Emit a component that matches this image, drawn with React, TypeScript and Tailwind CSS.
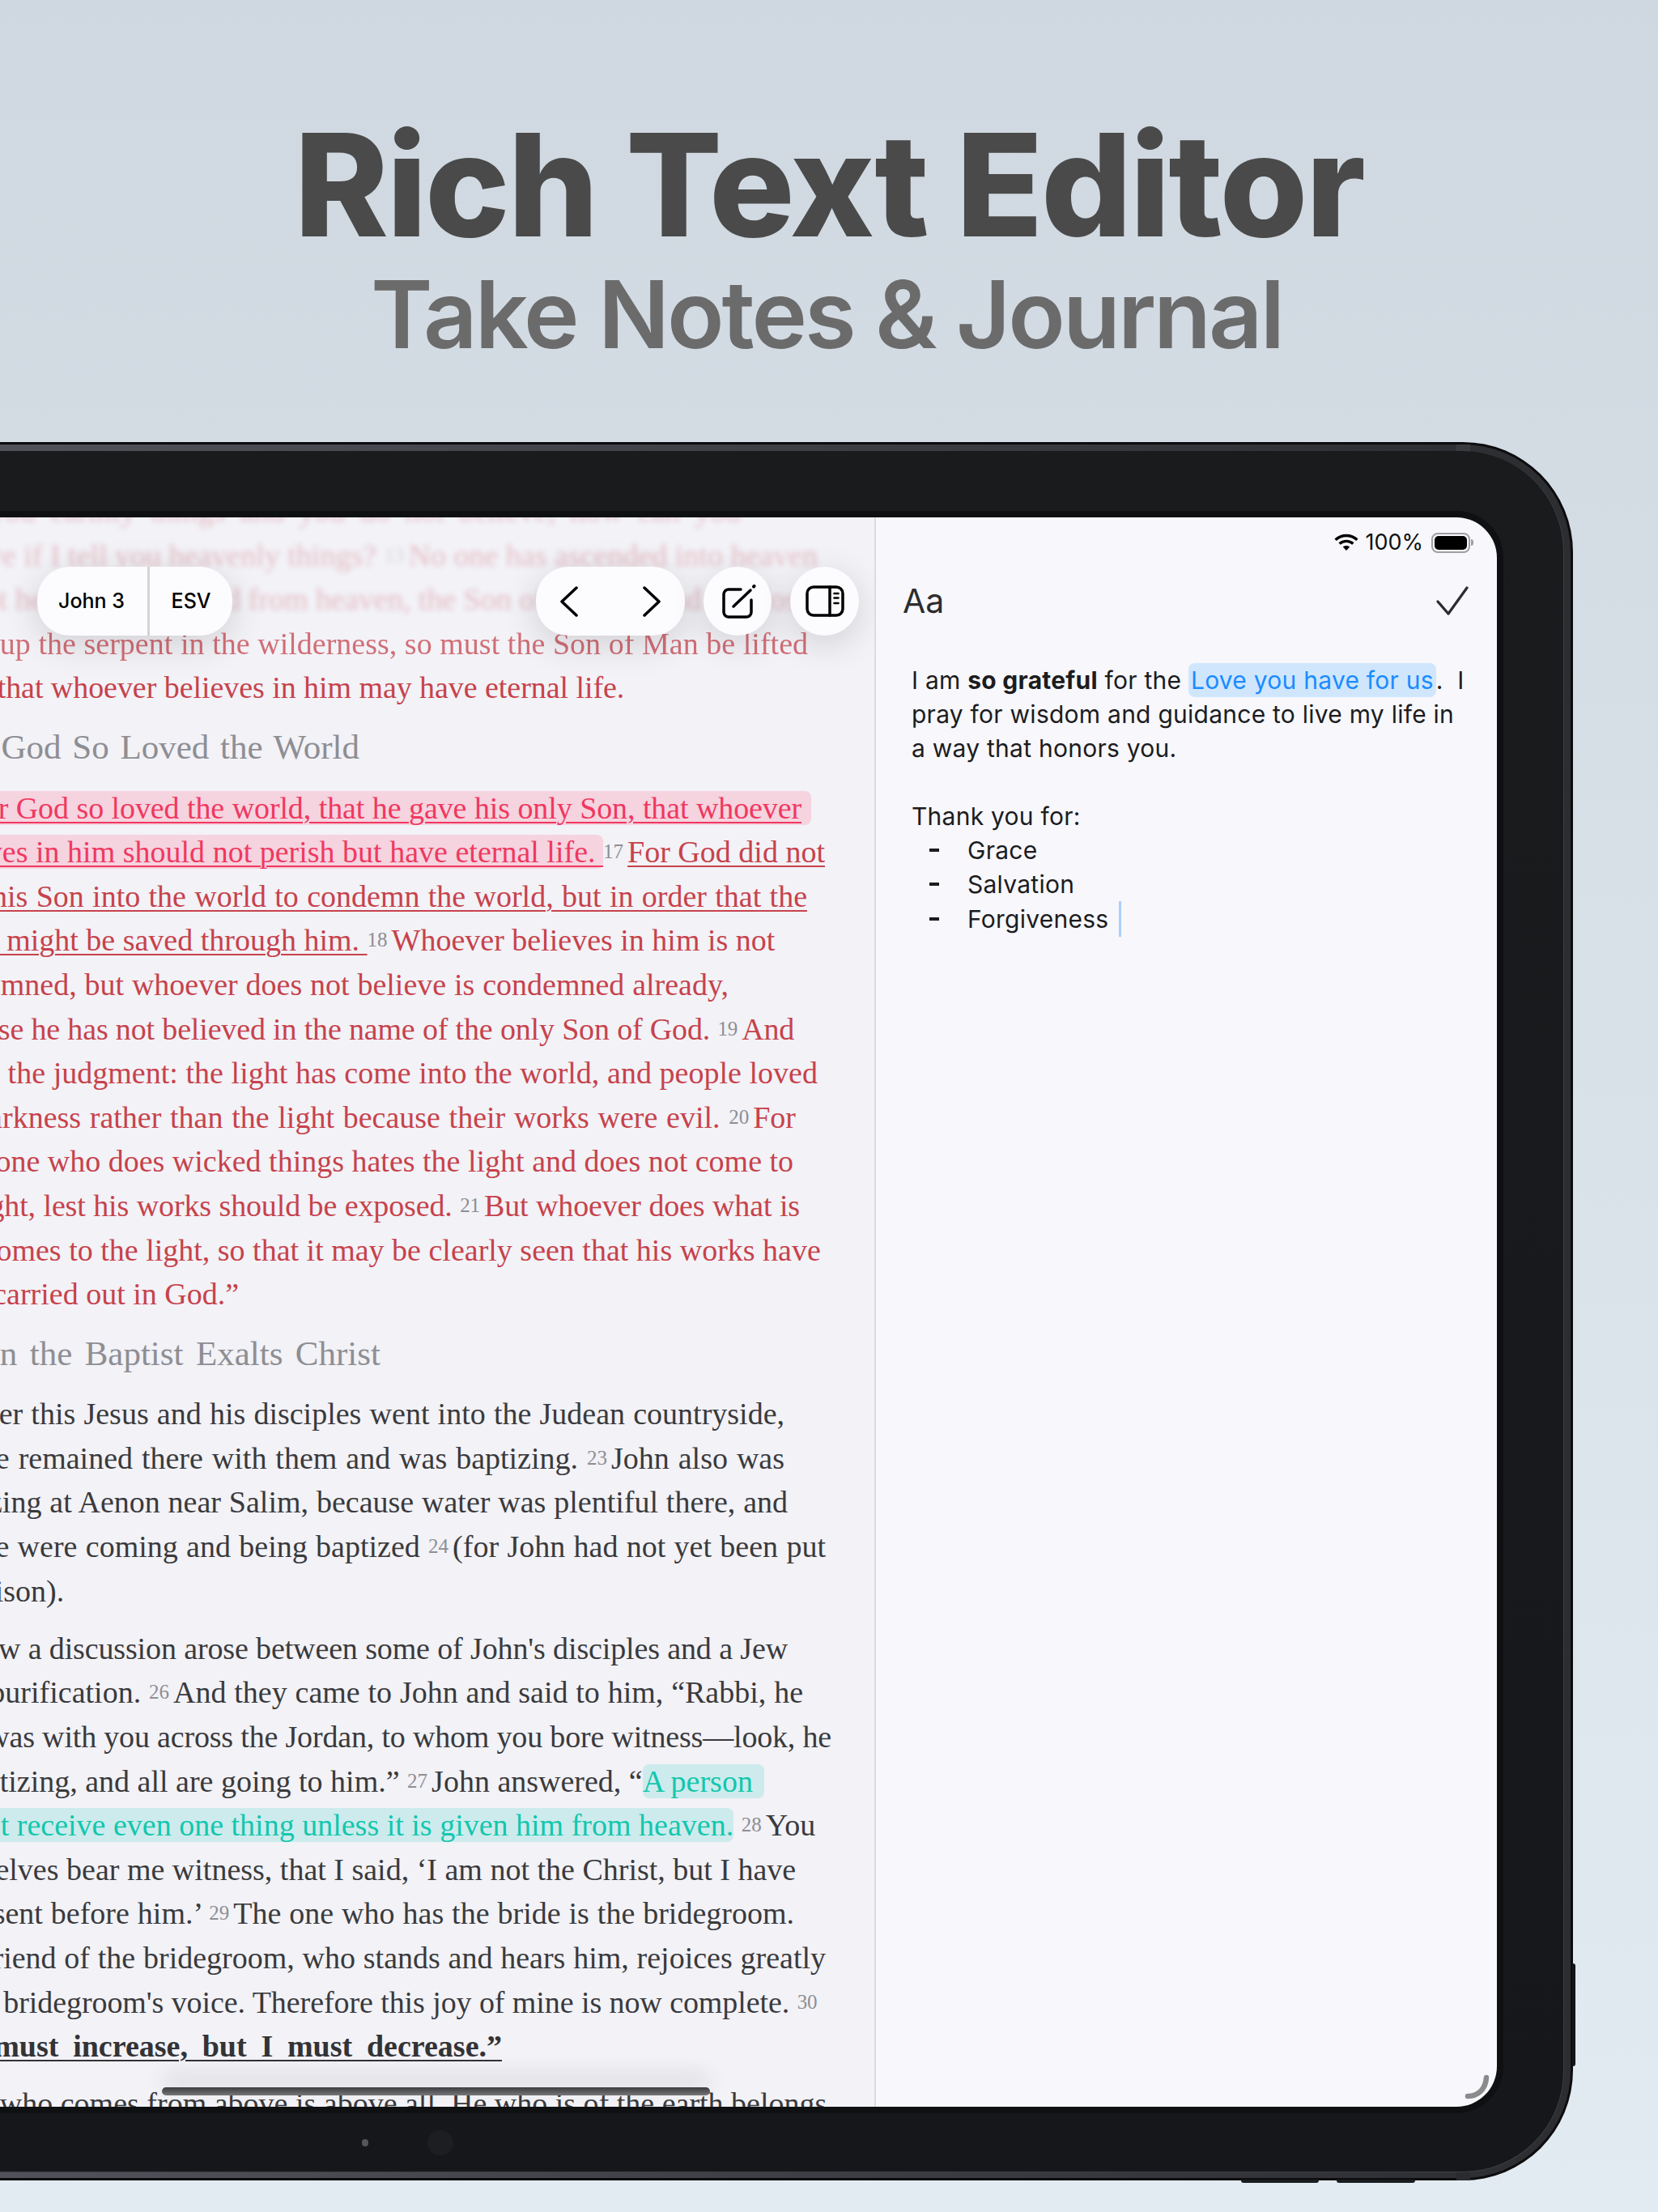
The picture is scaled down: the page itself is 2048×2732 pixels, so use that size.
import type { ReactNode } from "react";

function V({ n }: { n: string }) {
  return (
    <span className="relative -top-[5px] mr-[5px] text-[25px] leading-none text-[#8e8e93]">
      {n}
    </span>
  );
}

function Pink({ children, tail = false }: { children: ReactNode; tail?: boolean }) {
  return (
    <span className={`rounded-[8px] bg-[#f5d3df] text-[#f0385f] underline decoration-2 underline-offset-[4px] ${tail ? "pr-[12px]" : ""}`}>
      {children}
    </span>
  );
}

function Green({ children, tail = false }: { children: ReactNode; tail?: boolean }) {
  return (
    <span className={`rounded-[8px] bg-[#cdebed] text-[#12c7ad] ${tail ? "pr-[14px]" : ""}`}>
      {children}
    </span>
  );
}

function U({ children }: { children: ReactNode }) {
  return <span className="underline decoration-2 underline-offset-[4px]">{children}</span>;
}

type Line = { r: number; l?: number; c: ReactNode; className?: string };

function Row({ r, l = -90, c, className = "" }: Line) {
  return (
    <div
      className={`h-[54.6px] whitespace-nowrap [text-align-last:justify] ${className}`}
      style={{ marginLeft: l, width: r - l }}
    >
      {c}
    </div>
  );
}

const intro: Line[] = [
  { r: 915, c: "told you earthly things and you do not believe, how can you", className: "opacity-30 blur-[3px]" },
  { r: 1000, c: <>believe if I tell you heavenly things? <V n="13" />No one has ascended into heaven</>, className: "opacity-30 blur-[3px]" },
  { r: 1000, c: <>except he who descended from heaven, the Son of Man. <V n="14" />And as Moses</>, className: "opacity-30 blur-[3px]" },
  { r: 998, c: "lifted up the serpent in the wilderness, so must the Son of Man be lifted", className: "opacity-75 blur-[0.6px]" },
  { r: 770, c: <>up, <V n="15" />that whoever believes in him may have eternal life.</>, className: "tracking-[-0.06px]" },
];

const loved: Line[] = [
  { r: 1002, l: -72, c: <><V n="16" /><Pink tail>For God so loved the world, that he gave his only Son, that whoever</Pink></>, className: "tracking-[-0.12px]" },
  { r: 1019, c: <><Pink>believes in him should not perish but have eternal life. </Pink><V n="17" /><U>For God did not</U></> },
  { r: 997, c: <U>send his Son into the world to condemn the world, but in order that the</U> },
  { r: 956, c: <><U>world might be saved through him. </U><V n="18" />Whoever believes in him is not</> },
  { r: 900, c: "condemned, but whoever does not believe is condemned already," },
  { r: 981, c: <>because he has not believed in the name of the only Son of God. <V n="19" />And</>, className: "tracking-[-0.16px]" },
  { r: 1010, c: "this is the judgment: the light has come into the world, and people loved" },
  { r: 983, c: <>the darkness rather than the light because their works were evil. <V n="20" />For</> },
  { r: 976, c: "everyone who does wicked things hates the light and does not come to" },
  { r: 988, c: <>the light, lest his works should be exposed. <V n="21" />But whoever does what is</>, className: "tracking-[-0.14px]" },
  { r: 1012, c: "true comes to the light, so that it may be clearly seen that his works have" },
  { r: 295, c: "been carried out in God.”" },
];

const after: Line[] = [
  { r: 969, l: -52, c: "After this Jesus and his disciples went into the Judean countryside," },
  { r: 969, c: <>and he remained there with them and was baptizing. <V n="23" />John also was</> },
  { r: 973, c: "baptizing at Aenon near Salim, because water was plentiful there, and" },
  { r: 1020, c: <>people were coming and being baptized <V n="24" />(for John had not yet been put</> },
  { r: 78, l: -77, c: "in prison)." },
];

const discussion: Line[] = [
  { r: 973, l: -78, c: <><V n="25" />Now a discussion arose between some of John's disciples and a Jew</>, className: "tracking-[-0.14px]" },
  { r: 992, c: <>over purification. <V n="26" />And they came to John and said to him, “Rabbi, he</> },
  { r: 1027, c: "who was with you across the Jordan, to whom you bore witness—look, he", className: "tracking-[-0.18px]" },
  { r: 943, c: <>is baptizing, and all are going to him.” <V n="27" />John answered, “<Green tail>A person</Green></> },
  { r: 1006, c: <><Green>cannot receive even one thing unless it is given him from heaven.</Green> <V n="28" />You</> },
  { r: 983, c: "yourselves bear me witness, that I said, ‘I am not the Christ, but I have" },
  { r: 981, c: <>been sent before him.’ <V n="29" />The one who has the bride is the bridegroom.</> },
  { r: 1020, c: "The friend of the bridegroom, who stands and hears him, rejoices greatly" },
  { r: 1008, l: -88, c: <>at the bridegroom's voice. Therefore this joy of mine is now complete. <V n="30" /></>, className: "tracking-[-0.08px]" },
  { r: 620, l: -72, c: <span className="font-bold text-[#333336]"><U>He must increase, but I must decrease.”</U></span> },
];

function Reader() {
  return (
    <div className="relative h-full flex-1 overflow-hidden bg-[#f2f2f7] pl-[114px] font-['Liberation_Serif',serif] text-[38px] leading-[54.6px] text-[#3a3a3c]">
      <div className="-mt-[35px]">
        <div className="text-[#c7424b]">
          {intro.map((line, i) => (
            <Row key={i} {...line} />
          ))}
        </div>
        <Row r={444} l={-72} c="For God So Loved the World" className="my-[19.5px] text-[43px] text-[#8e8e93]" />
        <div className="text-[#c7424b]">
          {loved.map((line, i) => (
            <Row key={i} {...line} />
          ))}
        </div>
        <Row r={470} l={-60} c="John the Baptist Exalts Christ" className="my-[19.5px] text-[43px] text-[#8e8e93]" />
        <div className="mb-[16.5px]">
          {after.map((line, i) => (
            <Row key={i} {...line} />
          ))}
        </div>
        <div className="mb-[16.5px]">
          {discussion.map((line, i) => (
            <Row key={i} {...line} />
          ))}
        </div>
        <Row r={1000} l={-54} c="He who comes from above is above all. He who is of the earth belongs" />
      </div>

      <NavPills />

      <div className="absolute bottom-[14px] left-[314px] h-[10px] w-[677px] rounded-full bg-linear-to-b from-[#3d3d3f] to-[#77777a] shadow-[0_-14px_26px_rgba(0,0,0,0.16)]" />
    </div>
  );
}

function NavPills() {
  return (
    <div className="absolute left-[160px] top-[61px] flex h-[85px] w-[1015px] items-center font-['Inter',sans-serif] text-[25px] font-medium text-black">
      <div className="flex h-full w-[242px] items-center rounded-[40px] bg-[#fcfbfd] shadow-[0_10px_44px_rgba(0,0,0,0.14)]">
        <div className="flex h-full w-[139px] items-center justify-center border-r-[3px] border-[#d4d4d6] pr-[2px]">John 3</div>
        <div className="flex h-full flex-1 items-center justify-center">ESV</div>
      </div>
      <div className="ml-[375px] flex h-full w-[184px] items-center justify-between rounded-[40px] bg-[#fcfbfd] px-[28px] shadow-[0_10px_44px_rgba(0,0,0,0.14)]">
        <svg width="24" height="40" viewBox="0 0 24 40" fill="none" stroke="#000" strokeWidth="3.5" strokeLinecap="round" strokeLinejoin="round">
          <polyline points="22,3 4,20 22,37" />
        </svg>
        <svg width="24" height="40" viewBox="0 0 24 40" fill="none" stroke="#000" strokeWidth="3.5" strokeLinecap="round" strokeLinejoin="round">
          <polyline points="2,3 20,20 2,37" />
        </svg>
      </div>
      <div className="ml-[23px] flex h-[85px] w-[85px] items-center justify-center rounded-full bg-[#fcfbfd] pl-[4px] shadow-[0_10px_44px_rgba(0,0,0,0.14)]">
        <svg width="44" height="44" viewBox="0 0 44 44" fill="none" stroke="#000" strokeWidth="3.5" strokeLinecap="round">
          <path d="M24 7H9a6 6 0 0 0-6 6v22a6 6 0 0 0 6 6h22a6 6 0 0 0 6-6V20" />
          <path d="M15 28L36 8" />
          <path d="M40 3.5l.6-.6" strokeWidth="4" />
        </svg>
      </div>
      <div className="ml-[23px] flex h-[85px] w-[85px] items-center justify-center rounded-full bg-[#fcfbfd] shadow-[0_10px_44px_rgba(0,0,0,0.14)]">
        <svg width="48" height="39" viewBox="0 0 48 39" fill="none" stroke="#000" strokeWidth="3.5" strokeLinecap="round">
          <rect x="2" y="2" width="44" height="35" rx="8" />
          <path d="M30 2v35" />
          <path d="M35.5 10h5M35.5 15.5h5M35.5 22h5" strokeWidth="2.6" />
        </svg>
      </div>
    </div>
  );
}

function StatusBar() {
  return (
    <div className="flex h-[62px] items-center justify-end gap-[8px] pr-[29px] text-[27px] text-[#111]">
      <svg width="30" height="22" viewBox="0 0 30 22" fill="none" stroke="#000" strokeWidth="3.4">
        <path d="M1.6 7.8C9 .8 21 .8 28.4 7.8" />
        <path d="M6.6 12.6c4.7-4.3 12.1-4.3 16.8 0" />
        <path d="M15 21l-4.2-4.4c2.3-2 6.1-2 8.4 0z" fill="#000" stroke="none" />
      </svg>
      <span>100%</span>
      <div className="ml-[2px] flex items-center">
        <div className="h-[25px] w-[48px] rounded-[8px] border-2 border-[#a0a0a4] p-[2px]">
          <div className="h-full rounded-[5px] bg-black" />
        </div>
        <div className="ml-[1px] h-[8px] w-[3px] rounded-r-full bg-[#a0a0a4]" />
      </div>
    </div>
  );
}

function NotePanel() {
  return (
    <div className="relative h-full w-[769px] shrink-0 border-l-2 border-[#dcdce0] bg-[#f7f7fc] font-['Inter',sans-serif] text-[#1c1c1e]">
      <StatusBar />
      <div className="flex h-[82px] items-center justify-between pl-[33px] pr-[35px] pt-[2px]">
        <span className="text-[41px] text-[#2c2c2e]">Aa</span>
        <svg width="40" height="38" viewBox="0 0 40 38" fill="none" stroke="#2c2c2e" strokeWidth="3.2" strokeLinecap="round" strokeLinejoin="round">
          <polyline points="2,19 15,34 38,2" />
        </svg>
      </div>
      <div className="mt-[36px] whitespace-nowrap pl-[44px] text-[30px] leading-[42px] tracking-[0.25px]">
        <div>
          I am <b className="font-bold">so grateful</b> for the{" "}
          <span className="rounded-[8px] bg-[#d0e6fc] px-[3px] py-[3px] text-[#1a8cff]">Love you have for us</span>.&nbsp; I
        </div>
        <div>pray for wisdom and guidance to live my life in</div>
        <div>a way that honors you.</div>
        <div className="h-[42px]" />
        <div>Thank you for:</div>
        {["Grace", "Salvation", "Forgiveness"].map((item) => (
          <div key={item} className="flex items-center">
            <span className="ml-[22px] h-[4px] w-[12px] bg-[#1c1c1e]" />
            <span className="ml-[35px]">{item}</span>
            {item === "Forgiveness" && <span className="ml-[13px] h-[44px] w-[3px] bg-[#a9d0fa]" />}
          </div>
        ))}
      </div>
      <svg className="absolute bottom-[6px] right-[6px]" width="36" height="36" viewBox="0 0 36 36" fill="none" stroke="#8b8b8b" strokeWidth="6.5" strokeLinecap="round">
        <path d="M6 29C18 29 28 21 29 6" />
      </svg>
    </div>
  );
}

function Device() {
  return (
    <div className="relative -ml-[200px] h-[2147px] w-[2143px] rounded-[136px] bg-[#0c0c0e] p-[3px]">
      <div className="absolute -right-[3px] top-[1879px] h-[127px] w-[4px] rounded-r-[3px] bg-[#131416]" />
      <div className="absolute -bottom-[3px] left-[1733px] h-[4px] w-[96px] rounded-b-[3px] bg-[#1b1c1f]" />
      <div className="absolute -bottom-[3px] left-[1851px] h-[4px] w-[97px] rounded-b-[3px] bg-[#1b1c1f]" />
      <div className="absolute left-[1999px] top-[3px] h-[9px] w-[17px] bg-[#3a3b3f]" />
      <div className="absolute bottom-0 left-[1999px] h-[10px] w-[17px] bg-[#2a2b2e]" />
      <div className="h-full rounded-[133px] bg-linear-to-r from-[#55555f] to-[#2c2d31] pb-[7px] pr-[8px] pt-[8px]">
        <div className="relative h-full rounded-[125px] border-r border-b border-[#3d3e42] bg-linear-to-b from-[#1a1b1d] to-[#16171a] pb-[72px] pr-[74px] pl-[75px] pt-[74px]">
          <div className="absolute left-[644px] top-[2085px] h-[9px] w-[8px] rounded-full bg-[#55565a]" />
          <div className="absolute left-[725px] top-[2074px] h-[31px] w-[32px] rounded-full bg-[#1d1e22]" />
          <div className="h-full rounded-[58px] bg-[#0f1011] p-[8px]">
            <div className="flex h-full overflow-hidden rounded-[50px]">
              <Reader />
              <NotePanel />
            </div>
          </div>
        </div>
      </div>
    </div>
  );
}

export default function App() {
  return (
    <div className="h-[2732px] w-[2048px] overflow-hidden bg-linear-to-b from-[#cfd8e0] to-[#e3ebf2] font-['Inter',sans-serif]">
      <div className="flex h-[546px] flex-col items-center pt-[140px]">
        <h1 className="text-[176px] font-extrabold leading-[176px] tracking-[-2.4px] text-[#4a4a4a]">Rich Text Editor</h1>
        <h2 className="mt-[12px] pr-[6px] text-[116px] font-semibold leading-[120px] tracking-[-3px] text-[#6b6b6b]">Take Notes &amp; Journal</h2>
      </div>
      <Device />
    </div>
  );
}
